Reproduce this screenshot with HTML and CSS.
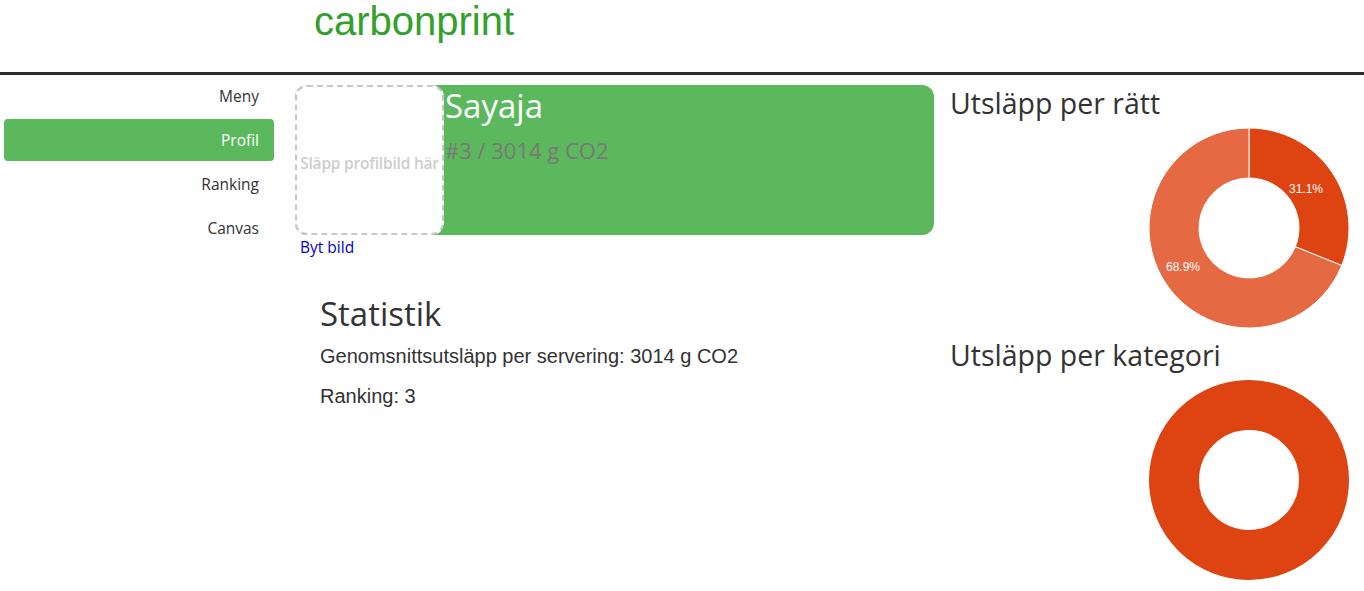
FILE: index.html
```html
<!DOCTYPE html>
<html lang="sv">
<head>
<meta charset="utf-8">
<title>carbonprint</title>
<link rel="stylesheet" href="styles.css">
</head>
<body>
<header class="topbar">
  <div class="logo">carbonprint</div>
</header>
<div class="layout">
  <nav class="sidebar">
    <a class="nav-item" href="#">Meny</a>
    <a class="nav-item active" href="#">Profil</a>
    <a class="nav-item" href="#">Ranking</a>
    <a class="nav-item" href="#">Canvas</a>
  </nav>
  <main class="middle">
    <div class="profile-card">
      <div class="dropzone"><span>Släpp profilbild här</span></div>
      <div class="profile-info">
        <div class="profile-name">Sayaja</div>
        <div class="profile-rank">#3 / 3014 g CO2</div>
      </div>
    </div>
    <a class="change-pic" href="#">Byt bild</a>
    <section class="stats">
      <h2 class="stats-title">Statistik</h2>
      <p class="stats-line">Genomsnittsutsläpp per servering: 3014 g CO2</p>
      <p class="stats-line">Ranking: 3</p>
    </section>
  </main>
  <aside class="charts">
    <h3 class="chart-title">Utsläpp per rätt</h3>
    <svg class="donut" width="200" height="200" viewBox="0 0 200 200">
      <path d="M100 0 A100 100 0 0 1 192.72 137.46 L146.36 118.73 A50 50 0 0 0 100 50 Z" fill="#dd4411" stroke="#fff" stroke-width="1"/>
      <path d="M192.72 137.46 A100 100 0 1 1 100 0 L100 50 A50 50 0 1 0 146.36 118.73 Z" fill="#e56a44" stroke="#fff" stroke-width="1"/>
      <text x="157" y="65" class="donut-label">31.1%</text>
      <text x="34" y="143" class="donut-label">68.9%</text>
    </svg>
    <h3 class="chart-title second">Utsläpp per kategori</h3>
    <svg class="donut" width="200" height="200" viewBox="0 0 200 200">
      <circle cx="100" cy="100" r="75" fill="none" stroke="#dd4411" stroke-width="50"/>
    </svg>
  </aside>
</div>
</body>
</html>
```
FILE: styles.css
```css
html, body {
  margin: 0;
  padding: 0;
  background: #fff;
}
body {
  font-family: "Open Sans", "Noto Sans", sans-serif;
  color: #333;
  overflow: hidden;
}
.topbar {
  height: 72px;
  border-bottom: 3px solid #2d2d2d;
  box-sizing: content-box;
}
.logo {
  padding-left: 314px;
  font-family: "Liberation Sans", Arial, sans-serif;
  font-size: 40px;
  line-height: 42px;
  color: #33a02c;
}
.layout {
  display: flex;
  align-items: flex-start;
}
.sidebar {
  width: 270px;
  margin-left: 4px;
  display: flex;
  flex-direction: column;
  gap: 2px;
}
.nav-item {
  display: block;
  padding: 10px 15px;
  line-height: 22px;
  font-size: 15.5px;
  text-align: right;
  color: #333;
  text-decoration: none;
  border-radius: 4px;
}
.nav-item.active {
  background: #5cb85c;
  color: #fff;
}
.middle {
  width: 639px;
  margin-left: 21px;
  padding-top: 10px;
}
.profile-card {
  display: flex;
  height: 150px;
  background: #5cb85c;
  border-radius: 12px;
}
.dropzone {
  width: 149px;
  height: 150px;
  box-sizing: border-box;
  border: 2px dashed #c8c8c8;
  border-radius: 12px;
  background: #fff;
  display: flex;
  align-items: center;
  justify-content: center;
  flex-shrink: 0;
}
.dropzone span {
  white-space: nowrap;
  font-size: 15.5px;
  font-weight: 600;
  color: #cdcdcd;
  margin-top: 6px;
  letter-spacing: -0.2px;
}
.profile-info {
  padding-left: 1px;
}
.profile-name {
  font-size: 33px;
  line-height: 40px;
  color: #fff;
  margin-top: 1px;
}
.profile-rank {
  font-size: 22px;
  line-height: 28px;
  color: #787878;
  margin-top: 10px;
}
.change-pic {
  display: inline-block;
  margin-left: 5px;
  margin-top: 2px;
  font-size: 15.5px;
  line-height: 20px;
  color: #0000cc;
  text-decoration: none;
}
.stats {
  padding-left: 25px;
  padding-top: 34px;
}
.stats-title {
  margin: 0;
  font-weight: 400;
  font-size: 33px;
  line-height: 44px;
  color: #333;
}
.stats-line {
  margin: 0 0 16px 0;
  font-family: "Liberation Sans", Arial, sans-serif;
  font-size: 20px;
  line-height: 24px;
  color: #333;
}
.stats-title + .stats-line {
  margin-top: 8px;
}
.charts {
  margin-left: 16px;
  padding-top: 11px;
  width: 414px;
}
.chart-title {
  margin: 0;
  font-weight: 400;
  font-size: 28.5px;
  line-height: 34px;
  color: #333;
}
.chart-title.second {
  margin-top: 10px;
}
.donut {
  display: block;
  margin-left: 199px;
  margin-top: 8px;
}
.donut-label {
  font-family: "Liberation Sans", Arial, sans-serif;
  font-size: 12px;
  fill: #fff;
  text-anchor: middle;
}
```
